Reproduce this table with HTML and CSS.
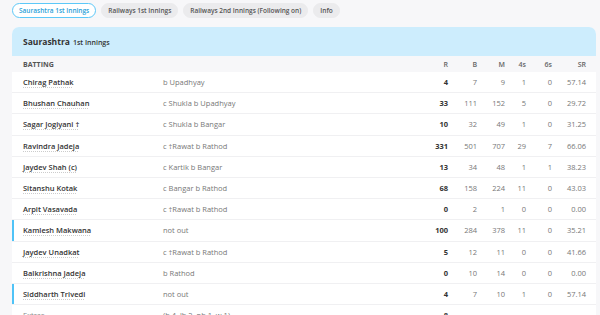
FILE: index.html
```html
<!DOCTYPE html>
<html>
<head>
<meta charset="utf-8">
<link rel="stylesheet" href="styles.css">
</head>
<body>
<div class="page">
  <nav class="tabs">
    <span class="tab active">Saurashtra 1st Innings</span>
    <span class="tab">Railways 1st Innings</span>
    <span class="tab">Railways 2nd Innings (Following on)</span>
    <span class="tab">Info</span>
  </nav>
  <section class="card">
    <header class="card-head"><span class="team">Saurashtra</span> <span class="inn">1st Innings</span></header>
    <div class="row head">
      <span>BATTING</span><span></span><span class="num">R</span><span class="num">B</span><span class="num">M</span><span class="num">4s</span><span class="num">6s</span><span class="num">SR</span>
    </div>
    <div class="row"><span class="name">Chirag Pathak</span><span class="dis">b Upadhyay</span><span class="num r">4</span><span class="num">7</span><span class="num">9</span><span class="num">1</span><span class="num">0</span><span class="num">57.14</span></div>
    <div class="row"><span class="name">Bhushan Chauhan</span><span class="dis">c Shukla b Upadhyay</span><span class="num r">33</span><span class="num">111</span><span class="num">152</span><span class="num">5</span><span class="num">0</span><span class="num">29.72</span></div>
    <div class="row"><span class="name">Sagar Jogiyani †</span><span class="dis">c Shukla b Bangar</span><span class="num r">10</span><span class="num">32</span><span class="num">49</span><span class="num">1</span><span class="num">0</span><span class="num">31.25</span></div>
    <div class="row"><span class="name">Ravindra Jadeja</span><span class="dis">c †Rawat b Rathod</span><span class="num r">331</span><span class="num">501</span><span class="num">707</span><span class="num">29</span><span class="num">7</span><span class="num">66.06</span></div>
    <div class="row"><span class="name">Jaydev Shah (c)</span><span class="dis">c Kartik b Bangar</span><span class="num r">13</span><span class="num">34</span><span class="num">48</span><span class="num">1</span><span class="num">1</span><span class="num">38.23</span></div>
    <div class="row"><span class="name">Sitanshu Kotak</span><span class="dis">c Bangar b Rathod</span><span class="num r">68</span><span class="num">158</span><span class="num">224</span><span class="num">11</span><span class="num">0</span><span class="num">43.03</span></div>
    <div class="row"><span class="name">Arpit Vasavada</span><span class="dis">c †Rawat b Rathod</span><span class="num r">0</span><span class="num">2</span><span class="num">1</span><span class="num">0</span><span class="num">0</span><span class="num">0.00</span></div>
    <div class="row notout"><span class="name">Kamlesh Makwana</span><span class="dis">not out</span><span class="num r">100</span><span class="num">284</span><span class="num">378</span><span class="num">11</span><span class="num">0</span><span class="num">35.21</span></div>
    <div class="row"><span class="name">Jaydev Unadkat</span><span class="dis">c †Rawat b Rathod</span><span class="num r">5</span><span class="num">12</span><span class="num">11</span><span class="num">0</span><span class="num">0</span><span class="num">41.66</span></div>
    <div class="row"><span class="name">Balkrishna Jadeja</span><span class="dis">b Rathod</span><span class="num r">0</span><span class="num">10</span><span class="num">14</span><span class="num">0</span><span class="num">0</span><span class="num">0.00</span></div>
    <div class="row notout"><span class="name">Siddharth Trivedi</span><span class="dis">not out</span><span class="num r">4</span><span class="num">7</span><span class="num">10</span><span class="num">1</span><span class="num">0</span><span class="num">57.14</span></div>
    <div class="row"><span class="extras">Extras</span><span class="dis">(b 4, lb 2, nb 1, w 1)</span><span class="num r">8</span><span></span><span></span><span></span><span></span><span></span></div>
  </section>
</div>
</body>
</html>
```
FILE: styles.css
```css
html, body {
  margin: 0;
  padding: 0;
  background: #f7f7f9;
  font-family: "Open Sans", "Noto Sans", sans-serif;
  color: #333;
  overflow: hidden;
}
.page {
  padding: 2px 4px 0 12px;
}
.tabs {
  display: flex;
  gap: 5px;
  height: 17px;
  align-items: center;
}
.tab {
  font-size: 6.5px;
  font-weight: 600;
  color: #555;
  background: #ebebed;
  border: 1px solid #ebebed;
  border-radius: 8px;
  padding: 3px 6px;
  line-height: 7px;
  white-space: nowrap;
}
.tab.active {
  background: #fff;
  border-color: #5cc8f8;
  color: #2a9fd8;
}
.card {
  margin-top: 8px;
  background: #fff;
  border-radius: 7px 7px 0 0;
  overflow: hidden;
}
.card-head {
  background: #cdedfd;
  height: 29px;
  display: flex;
  align-items: center;
  padding-left: 11px;
  gap: 3px;
}
.team {
  font-size: 8.5px;
  font-weight: 700;
  color: #333;
}
.inn {
  font-size: 7px;
  font-weight: 600;
  color: #333;
  padding-top: 1px;
}
.row {
  display: grid;
  grid-template-columns: 140px 1fr 30px 29px 28px 21px 26px 34px;
  align-items: center;
  height: 20.2px;
  padding: 0 10px 0 11px;
  border-bottom: 1px solid #f0f0f2;
  font-size: 7.5px;
  color: #777;
  position: relative;
}
.row.head {
  height: 16px;
  background: #f7f7f9;
  border-bottom: none;
  font-size: 7px;
  font-weight: 700;
  color: #555;
}
.row.head .num {
  font-weight: 600;
  color: #666;
}
.row.notout {
  box-shadow: inset 2px 0 0 #4fc3f7;
}
.name {
  font-weight: 600;
  color: #333;
  text-decoration: underline dotted #ccc;
  text-underline-offset: 2px;
}
.extras {
  color: #888;
}
.dis {
  color: #777;
}
.num {
  text-align: right;
}
.num.r {
  font-weight: 700;
  color: #333;
}
```
